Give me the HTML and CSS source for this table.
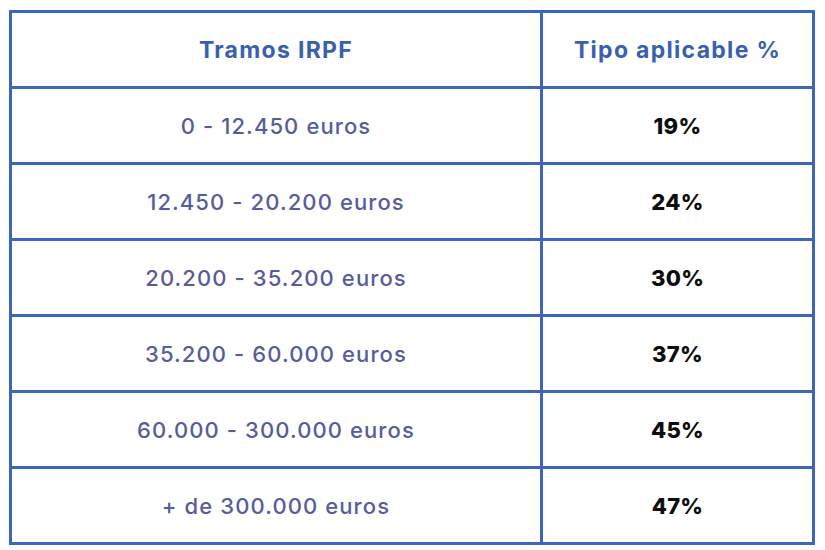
FILE: index.html
```html
<!DOCTYPE html>
<html lang="es">
<head>
<meta charset="utf-8">
<link rel="stylesheet" href="styles.css">
</head>
<body>
<table class="irpf">
  <thead>
    <tr><th class="c1">Tramos IRPF</th><th class="c2">Tipo aplicable %</th></tr>
  </thead>
  <tbody>
    <tr><td class="range">0 - 12.450 euros</td><td class="pct">19%</td></tr>
    <tr><td class="range">12.450 - 20.200 euros</td><td class="pct">24%</td></tr>
    <tr><td class="range">20.200 - 35.200 euros</td><td class="pct">30%</td></tr>
    <tr><td class="range">35.200 - 60.000 euros</td><td class="pct">37%</td></tr>
    <tr><td class="range">60.000 - 300.000 euros</td><td class="pct">45%</td></tr>
    <tr><td class="range">+ de 300.000 euros</td><td class="pct">47%</td></tr>
  </tbody>
</table>
</body>
</html>
```
FILE: styles.css
```css
html, body {
  margin: 0;
  padding: 0;
  background: #ffffff;
}
body {
  padding: 10px 0 0 9px;
  font-family: Inter, "Open Sans", sans-serif;
}
.irpf {
  border-collapse: collapse;
  width: 806px;
  table-layout: fixed;
}
.irpf th, .irpf td {
  border: 3px solid #3c66b6;
  text-align: center;
  vertical-align: middle;
  padding: 0;
  height: 73px;
}
.c1 { width: 528px; }
.irpf th {
  color: #3a5fae;
  font-weight: 700;
  font-size: 23px;
  letter-spacing: 1.3px;
}
.range {
  color: #575c9c;
  font-weight: 500;
  font-size: 22px;
  letter-spacing: 1.1px;
}
.pct {
  color: #0d0d0d;
  font-weight: 800;
  font-size: 22px;
  letter-spacing: 0.3px;
}
```
